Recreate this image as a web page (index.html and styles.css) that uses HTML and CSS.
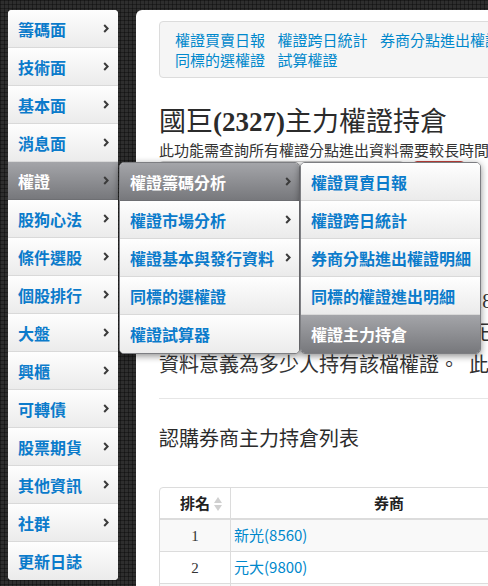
FILE: index.html
```html
<!DOCTYPE html>
<html lang="zh-Hant">
<head>
<meta charset="utf-8">
<title>國巨(2327)主力權證持倉</title>
<link rel="stylesheet" href="styles.css">
</head>
<body>
<div class="page">
  <nav class="sidenav">
    <ul class="menu">
      <li class="mi"><span>籌碼面</span><svg class="chev" viewBox="0 0 6 9"><path d="M1.2 1 L4.6 4.5 L1.2 8"/></svg></li>
      <li class="mi"><span>技術面</span><svg class="chev" viewBox="0 0 6 9"><path d="M1.2 1 L4.6 4.5 L1.2 8"/></svg></li>
      <li class="mi"><span>基本面</span><svg class="chev" viewBox="0 0 6 9"><path d="M1.2 1 L4.6 4.5 L1.2 8"/></svg></li>
      <li class="mi"><span>消息面</span><svg class="chev" viewBox="0 0 6 9"><path d="M1.2 1 L4.6 4.5 L1.2 8"/></svg></li>
      <li class="mi active"><span>權證</span><svg class="chev" viewBox="0 0 6 9"><path d="M1.2 1 L4.6 4.5 L1.2 8"/></svg>
        <ul class="submenu sub2">
          <li class="mi active"><span>權證籌碼分析</span><svg class="chev" viewBox="0 0 6 9"><path d="M1.2 1 L4.6 4.5 L1.2 8"/></svg>
            <ul class="submenu sub3">
              <li class="mi"><span>權證買賣日報</span></li>
              <li class="mi"><span>權證跨日統計</span></li>
              <li class="mi"><span>券商分點進出權證明細</span></li>
              <li class="mi"><span>同標的權證進出明細</span></li>
              <li class="mi active"><span>權證主力持倉</span></li>
            </ul>
          </li>
          <li class="mi"><span>權證市場分析</span><svg class="chev" viewBox="0 0 6 9"><path d="M1.2 1 L4.6 4.5 L1.2 8"/></svg></li>
          <li class="mi"><span>權證基本與發行資料</span><svg class="chev" viewBox="0 0 6 9"><path d="M1.2 1 L4.6 4.5 L1.2 8"/></svg></li>
          <li class="mi"><span>同標的選權證</span></li>
          <li class="mi"><span>權證試算器</span></li>
        </ul>
      </li>
      <li class="mi"><span>股狗心法</span><svg class="chev" viewBox="0 0 6 9"><path d="M1.2 1 L4.6 4.5 L1.2 8"/></svg></li>
      <li class="mi"><span>條件選股</span><svg class="chev" viewBox="0 0 6 9"><path d="M1.2 1 L4.6 4.5 L1.2 8"/></svg></li>
      <li class="mi"><span>個股排行</span><svg class="chev" viewBox="0 0 6 9"><path d="M1.2 1 L4.6 4.5 L1.2 8"/></svg></li>
      <li class="mi"><span>大盤</span><svg class="chev" viewBox="0 0 6 9"><path d="M1.2 1 L4.6 4.5 L1.2 8"/></svg></li>
      <li class="mi"><span>興櫃</span><svg class="chev" viewBox="0 0 6 9"><path d="M1.2 1 L4.6 4.5 L1.2 8"/></svg></li>
      <li class="mi"><span>可轉債</span><svg class="chev" viewBox="0 0 6 9"><path d="M1.2 1 L4.6 4.5 L1.2 8"/></svg></li>
      <li class="mi"><span>股票期貨</span><svg class="chev" viewBox="0 0 6 9"><path d="M1.2 1 L4.6 4.5 L1.2 8"/></svg></li>
      <li class="mi"><span>其他資訊</span><svg class="chev" viewBox="0 0 6 9"><path d="M1.2 1 L4.6 4.5 L1.2 8"/></svg></li>
      <li class="mi"><span>社群</span><svg class="chev" viewBox="0 0 6 9"><path d="M1.2 1 L4.6 4.5 L1.2 8"/></svg></li>
      <li class="mi"><span>更新日誌</span></li>
    </ul>
  </nav>

  <main class="panel">
    <div class="tabs">
      <ul class="tab-list">
        <li><a>權證買賣日報</a></li>
        <li><a>權證跨日統計</a></li>
        <li><a>券商分點進出權證明細</a></li>
        <li><a>同標的權證進出明細</a></li>
        <li><a>權證主力持倉</a></li>
        <li><a>同標的選權證</a></li>
        <li><a>試算權證</a></li>
      </ul>
    </div>

    <h1 class="title">國巨<span class="code">(2327)</span>主力權證持倉</h1>
    <p class="subtitle">此功能需查詢所有權證分點進出資料需要較長時間讀取，請耐心等候</p>

    <form class="query">
      <input class="query-input" type="text" value="">
      <button class="btn-query" type="button">查詢</button>
    </form>

    <p class="lead">本頁統計持有國巨(2327)權證券商共18家，依持有張數排序<br>依各券商每日買賣超之張數推算至今已累積的持倉張數，<br>資料意義為多少人持有該檔權證。&nbsp; 此表僅供參考</p>

    <hr class="rule">

    <h3 class="section-title">認購券商主力持倉列表</h3>

    <div class="dt-wrap">
      <div class="dt-filter"><label>搜尋:</label><input class="dt-input" type="text"></div>
      <table class="dt">
        <thead>
          <tr>
            <th class="c-rank">排名<svg class="sort" viewBox="0 0 8 14"><path d="M4 0 L8 6 L0 6 Z"/><path d="M0 8 L8 8 L4 14 Z"/></svg></th>
            <th class="c-broker">券商</th>
            <th class="c-more">持有張數</th>
          </tr>
        </thead>
        <tbody>
          <tr class="odd"><td class="c-rank">1</td><td><a>新光(8560)</a></td><td></td></tr>
          <tr><td class="c-rank">2</td><td><a>元大(9800)</a></td><td></td></tr>
          <tr class="odd"><td class="c-rank">3</td><td><a>凱基(9200)</a></td><td></td></tr>
        </tbody>
      </table>
    </div>
  </main>
</div>
</body>
</html>
```

FILE: styles.css
```css
* { box-sizing: border-box; }

html, body {
  margin: 0;
  height: 100%;
}

body {
  overflow: hidden;
  background-color: #2e2e2e;
  background-image:
    linear-gradient(rgba(0,0,0,0.35) 1px, transparent 1px),
    linear-gradient(90deg, rgba(0,0,0,0.35) 1px, transparent 1px);
  background-size: 4px 4px;
  font-family: "Liberation Serif", "Noto Sans CJK TC", serif;
  color: #333;
}

.page {
  display: flex;
  align-items: flex-start;
  gap: 18px;
  padding: 10px 0 0 8px;
  width: 900px;
}

/* ---------- side menu ---------- */
.sidenav {
  width: 110px;
  flex: none;
  position: relative;
  z-index: 10;
}

.menu, .submenu {
  list-style: none;
  margin: 0;
  padding: 0;
}

.menu {
  background: #fff;
  border-radius: 4px;
}

.mi {
  position: relative;
  height: 38px;
  display: flex;
  align-items: center;
  justify-content: space-between;
  padding: 0 9px 0 10px;
  background: linear-gradient(#fefefe, #ebebeb);
  border-bottom: 1px solid #d9d9d9;
  font: bold 16px/20px "Noto Sans CJK TC", sans-serif;
  color: #0b7bcb;
  white-space: nowrap;
}

.menu > .mi:first-child { border-radius: 4px 4px 0 0; }
.menu > .mi:last-child { border-radius: 0 0 4px 4px; border-bottom: none; }

.mi.active {
  background: linear-gradient(#a4a5a9, #77787c);
  color: #fff;
  border-bottom-color: #6e6f73;
}

.chev {
  width: 6px;
  height: 9px;
  flex: none;
}
.chev path {
  fill: none;
  stroke: #3b3b3b;
  stroke-width: 2;
}

.submenu {
  position: absolute;
  top: 0;
  left: calc(100% + 1px);
  width: 181px;
  background: #fff;
  border: 1px solid #7d7e82;
  border-radius: 5px;
  box-shadow: 0 2px 7px rgba(0,0,0,0.45);
}

.submenu .mi {
  padding: 0 8px 0 10px;
}
.submenu > .mi:first-child { border-radius: 4px 4px 0 0; }
.submenu > .mi:last-child { border-radius: 0 0 4px 4px; border-bottom: none; }

.sub3 {
  top: -1px;
  left: calc(100% + 1px);
}

/* ---------- content panel ---------- */
.panel {
  flex: none;
  width: 700px;
  min-height: 600px;
  background: #fff;
  border-radius: 6px;
  padding: 11px 22px 0 23px;
}

.tabs {
  height: 57px;
  border: 1px solid #dcdcdc;
  border-radius: 4px;
  background: #f5f5f5;
  padding: 8px 15px 7px;
}

.tab-list {
  list-style: none;
  margin: 0;
  padding: 0;
  display: flex;
  flex-wrap: wrap;
  column-gap: 12.5px;
  font: 15px/20px "Noto Sans CJK TC", sans-serif;
}

.tab-list a,
.dt a {
  color: #0088cc;
}

.title {
  margin: 27px 0 0;
  font: 400 27px/30px "Noto Sans CJK TC", sans-serif;
  color: #2b2b2b;
}

.title .code {
  font-family: "Liberation Serif", serif;
  font-weight: bold;
}

.subtitle {
  margin: 3px 0 0;
  font: 15px/20px "Noto Sans CJK TC", sans-serif;
}

.query {
  margin: 1px 0 0;
  display: flex;
  gap: 9px;
}

.query-input {
  width: 245px;
  height: 34px;
  border: 1px solid #ccc;
  border-radius: 4px;
}

.btn-query {
  width: 52px;
  height: 34px;
  border: 1px solid #c0413b;
  border-radius: 4px;
  background: linear-gradient(#ee5f5b, #bd362f);
  color: #fff;
  font: 14px "Noto Sans CJK TC", sans-serif;
}

.lead {
  margin: 90px 0 0;
  font-size: 20px;
  line-height: 32px;
  white-space: nowrap;
}

.rule {
  margin: 17px 0 0;
  border: 0;
  border-top: 1px solid #e6e6e6;
}

.section-title {
  margin: 19px 0 0;
  font: 400 20px/40px "Noto Sans CJK TC", sans-serif;
  color: #2b2b2b;
}

/* ---------- data table ---------- */
.dt-wrap {
  width: 600px;
}

.dt-filter {
  display: flex;
  justify-content: flex-end;
  align-items: center;
  height: 14px;
  margin-bottom: 15px;
  font: 14px/14px "Noto Sans CJK TC", sans-serif;
}

.dt-filter label { margin-right: 4px; }

.dt-input {
  width: 109px;
  height: 26px;
  border: 1px solid #ccc;
  border-radius: 4px;
}

.dt {
  width: 600px;
  border-collapse: separate;
  border-spacing: 0;
  border: 1px solid #dcdcdc;
  border-radius: 4px;
  font-size: 15px;
}

.dt th,
.dt td {
  padding: 5px 3px;
  line-height: 20px;
  border-left: 1px solid #dcdcdc;
  text-align: left;
}

.dt th:first-child,
.dt td:first-child { border-left: none; }

.dt th {
  font-family: "Noto Sans CJK TC", sans-serif;
  font-weight: bold;
  text-align: center;
  color: #222;
}

.dt td {
  border-top: 1px solid #dcdcdc;
}

.dt tbody tr:first-child td {
  border-top: 2px solid #dcdcdc;
}

.dt tr.odd td { background: #f9f9f9; }

.dt .c-rank {
  width: 70px;
  text-align: center;
  position: relative;
}

.dt .c-broker { width: 317px; }

.dt a {
  font-family: "Noto Sans CJK TC", sans-serif;
}

.sort {
  position: absolute;
  right: 8px;
  top: 9px;
  width: 8px;
  height: 14px;
}
.sort path { fill: #d0d0d0; }
```
